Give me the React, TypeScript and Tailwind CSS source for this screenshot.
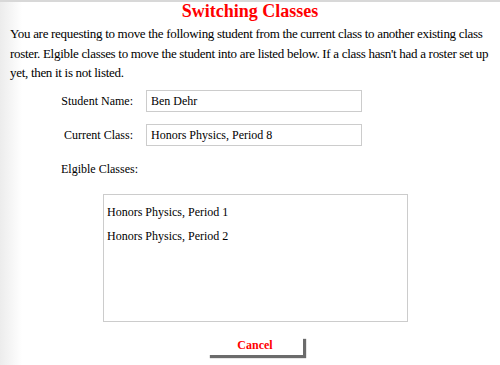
export default function App() {
  return (
    <div className="w-[500px] h-[365px] overflow-hidden border-t-2 border-[#d8d8d8] bg-[linear-gradient(to_right,#ececec,#ffffff_22px)] font-['Liberation_Serif',serif] text-black">
      <h1 className="text-center text-[18px] leading-[18px] font-bold text-[#ff0000]">Switching Classes</h1>

      <p className="pl-[10px] pr-[4px] pt-[4px] text-[13px] leading-[19.5px] tracking-[-0.3px]">
        You are requesting to move the following student from the current class to another existing class roster. Elgible
        classes to move the student into are listed below. If a class hasn't had a roster set up yet, then it is not listed.
      </p>

      <div className="mt-[7px] flex flex-col gap-[12px] text-[12px]">
        <div className="flex items-center">
          <div className="w-[133px] text-right">Student Name:</div>
          <div className="ml-[13px] w-[216px] h-[22px] border border-[#cccccc] bg-white px-[4px] flex items-center">
            Ben Dehr
          </div>
        </div>
        <div className="flex items-center">
          <div className="w-[133px] text-right">Current Class:</div>
          <div className="ml-[13px] w-[216px] h-[22px] border border-[#cccccc] bg-white px-[4px] flex items-center">
            Honors Physics, Period 8
          </div>
        </div>
      </div>

      <div className="ml-[61px] mt-[15px] text-[12px] leading-[16px]">Elgible Classes:</div>

      <div className="ml-[103px] mt-[17px] w-[305px] h-[128px] border border-[#cccccc] bg-white px-[3px] pt-[10px] text-[12px] leading-[14px] flex flex-col gap-[10px]">
        <div>Honors Physics, Period 1</div>
        <div>Honors Physics, Period 2</div>
      </div>

      <div className="mt-[14px] flex justify-center">
        <button className="ml-[10px] w-[96px] h-[19px] bg-white text-[#ff0000] font-bold text-[12px] shadow-[3px_3px_1px_#6b6b6b]">
          Cancel
        </button>
      </div>
    </div>
  )
}
